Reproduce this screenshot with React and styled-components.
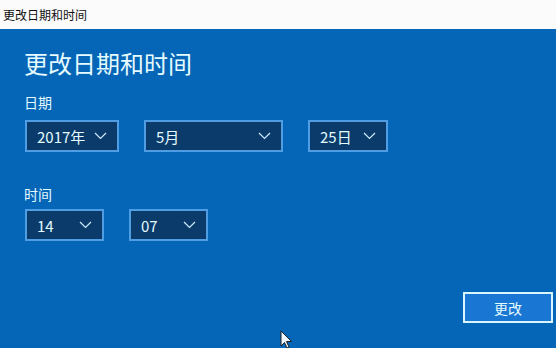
import React from 'react'
import styled, { createGlobalStyle } from 'styled-components'

const Global = createGlobalStyle`
  html, body { margin: 0; padding: 0; }
  body {
    width: 556px; height: 348px; overflow: hidden;
    font-family: "Noto Sans CJK SC", "Noto Sans", sans-serif;
    background: #0565b6;
  }
`

const Window = styled.div`
  width: 556px; height: 348px;
  display: flex; flex-direction: column;
  position: relative;
`

const TitleBar = styled.div`
  height: 29px;
  background: #fbfbfb;
  display: flex; align-items: center;
  padding-left: 3px;
  font-size: 12px;
  color: #111;
`

const Body = styled.div`
  flex: 1;
  background: #0565b6;
  padding: 0 24px;
  display: flex; flex-direction: column;
  color: #e4fbff;
`

const Heading = styled.h1`
  margin: 17px 0 0;
  font-size: 24px;
  font-weight: 400;
  line-height: 34px;
`

const Label = styled.div`
  font-size: 14px;
  line-height: 20px;
  margin-top: ${p => p.$top}px;
`

const Row = styled.div`
  display: flex;
  gap: 25px;
  margin-top: ${p => p.$top}px;
  padding-left: 1px;
`

const Select = styled.div`
  box-sizing: border-box;
  width: ${p => p.$w}px;
  height: 32px;
  border: 2px solid #4f9de2;
  background: #0b3b6b;
  display: flex; align-items: center; justify-content: space-between;
  padding: 0 10px 0 10px;
  font-size: 15px;
  color: #e4fbff;
`

const Chevron = () => (
  <svg width="13" height="8" viewBox="0 0 13 8">
    <path d="M1 1 L6.5 6.5 L12 1" fill="none" stroke="#cfe9ff" strokeWidth="1.2" />
  </svg>
)

const Footer = styled.div`
  margin-top: auto;
  display: flex; justify-content: flex-end;
  margin-right: -21px;
  margin-bottom: 25px;
`

const Button = styled.button`
  box-sizing: border-box;
  width: 90px; height: 31px;
  border: 2px solid #d8f6ff;
  background: #1a76d3;
  color: #e4fbff;
  font-family: inherit;
  font-size: 14px;
`

const Cursor = styled.svg`
  position: absolute;
  left: 280px; top: 330px;
`

export default function App() {
  return (
    <>
      <Global />
      <Window>
        <TitleBar>更改日期和时间</TitleBar>
        <Body>
          <Heading>更改日期和时间</Heading>
          <Label $top={12}>日期</Label>
          <Row $top={8}>
            <Select $w={94}><span>2017年</span><Chevron /></Select>
            <Select $w={139}><span>5月</span><Chevron /></Select>
            <Select $w={80}><span>25日</span><Chevron /></Select>
          </Row>
          <Label $top={32}>时间</Label>
          <Row $top={5}>
            <Select $w={79}><span>14</span><Chevron /></Select>
            <Select $w={79}><span>07</span><Chevron /></Select>
          </Row>
          <Footer>
            <Button>更改</Button>
          </Footer>
        </Body>
        <Cursor width="14" height="20" viewBox="0 0 14 20">
          <path d="M1 1 L1 16 L4.5 12.5 L7 18 L9 17 L6.5 11.5 L11.5 11.5 Z" fill="#eef6ff" stroke="#222" strokeWidth="1" />
        </Cursor>
      </Window>
    </>
  )
}
